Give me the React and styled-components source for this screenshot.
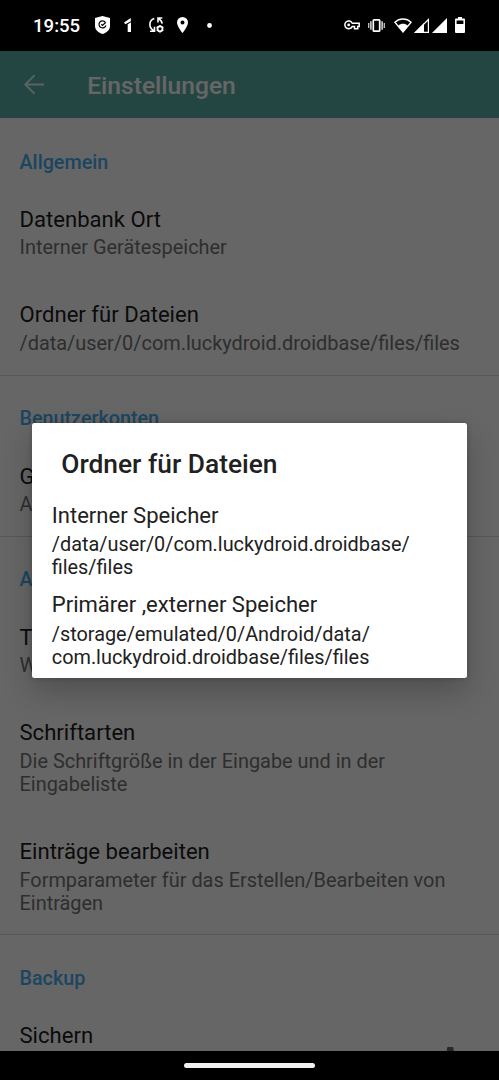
import React from "react";
import styled, { createGlobalStyle } from "styled-components";

const GlobalStyle = createGlobalStyle`
  * {
    box-sizing: border-box;
  }

  body {
    margin: 0;
    background: #000;
    font-family: Roboto, "Liberation Sans", sans-serif;
  }
`;

const Screen = styled.div`
  position: relative;
  display: flex;
  flex-direction: column;
  width: 499px;
  height: 1080px;
  overflow: hidden;
  background: #fff;
`;

const StatusBar = styled.header`
  z-index: 2;
  display: flex;
  flex: none;
  align-items: center;
  justify-content: space-between;
  height: 50.5px;
  padding: 0 34px 0 33px;
  background: #000;
  color: #fff;
`;

const StatusGroup = styled.div`
  display: flex;
  align-items: center;
`;

const Clock = styled.span`
  width: 61.5px;
  padding-top: 2px;
  font-size: 18.6px;
  font-weight: 500;
  line-height: 24px;
`;

const StatusIcon = styled.svg`
  display: block;
  flex: none;
  margin-right: ${(props) => props.$gap || 0}px;
  overflow: visible;
`;

const Toolbar = styled.div`
  display: flex;
  flex: none;
  align-items: center;
  height: 67.5px;
  padding: 1px 20px 0 24px;
  background: #5aafa8;
  color: #fff;
`;

const ToolbarTitle = styled.h1`
  margin: 2px 0 0 42.2px;
  font-size: 24.6px;
  font-weight: 500;
  line-height: 30px;
`;

const List = styled.main`
  flex: 1;
  min-height: 0;
  overflow: hidden;
`;

const Section = styled.section`
  border-bottom: 1px solid #dadada;
  margin-bottom: -0.8px;
`;

const Category = styled.h2`
  height: 65.5px;
  margin: 0;
  padding: 32.5px 19.5px 0;
  color: #46aef0;
  font-size: 19.75px;
  font-weight: 500;
  line-height: 23.5px;
`;

const Preference = styled.div`
  display: flex;
  align-items: center;
  justify-content: space-between;
  min-height: ${(props) => (props.$tall ? 118.7 : 95.5)}px;
  padding: ${(props) => (props.$action ? "0 33.5px 0 19.5px" : "0 19.5px")};
`;

const PreferenceText = styled.div`
  align-self: flex-start;
  padding-top: 22.4px;
`;

const PreferenceTitle = styled.div`
  color: #1c1c1c;
  font-size: 22.1px;
  line-height: 26px;
`;

const Summary = styled.div`
  margin-top: 4.6px;
  color: #747474;
  font-size: 19.92px;
  line-height: 23.2px;
  white-space: pre-line;
`;

const NavigationBar = styled.footer`
  z-index: 2;
  display: flex;
  flex: none;
  justify-content: center;
  height: 29px;
  padding-top: 12px;
  background: #000;
`;

const HomeHandle = styled.div`
  width: 131px;
  height: 5px;
  border-radius: 2.5px;
  background: #f1f1f1;
`;

const Scrim = styled.div`
  position: absolute;
  inset: 0;
  z-index: 1;
  display: flex;
  align-items: center;
  justify-content: center;
  padding-top: 21px;
  background: rgba(0, 0, 0, 0.6);
`;

const Dialog = styled.div`
  width: 434.5px;
  height: 255.6px;
  padding: 25.9px 19.5px 0;
  border-radius: 2.5px;
  background: #fff;
  box-shadow: 0 14px 30px rgba(0, 0, 0, 0.22), 0 0 5px rgba(0, 0, 0, 0.2);
  color: #212121;
`;

const DialogTitle = styled.h2`
  margin: 0 0 18px;
  padding-left: 9.5px;
  font-size: 26.35px;
  font-weight: 500;
  line-height: 30px;
`;

const Option = styled.div`
  padding: 6.3px 0;
`;

const OptionTitle = styled.div`
  font-size: 22.05px;
  line-height: 26px;
`;

const OptionPath = styled.div`
  margin-top: 4.4px;
  font-size: 19.88px;
  line-height: 23.2px;
  white-space: pre-line;
`;

const sections = [
  {
    name: "Allgemein",
    items: [
      { title: "Datenbank Ort", summary: "Interner Gerätespeicher" },
      {
        title: "Ordner für Dateien",
        summary: "/data/user/0/com.luckydroid.droidbase/files/files",
      },
    ],
  },
  {
    name: "Benutzerkonten",
    items: [{ title: "G", summary: "A" }],
  },
  {
    name: "A",
    items: [
      { title: "T", summary: "W" },
      {
        title: "Schriftarten",
        summary: "Die Schriftgröße in der Eingabe und in der\nEingabeliste",
        tall: true,
      },
      {
        title: "Einträge bearbeiten",
        summary: "Formparameter für das Erstellen/Bearbeiten von\nEinträgen",
        tall: true,
      },
    ],
  },
  {
    name: "Backup",
    items: [{ title: "Sichern", tall: true, action: true }],
  },
];

const folders = [
  {
    title: "Interner Speicher",
    path: "/data/user/0/com.luckydroid.droidbase/\nfiles/files",
  },
  {
    title: "Primärer ,externer Speicher",
    path: "/storage/emulated/0/Android/data/\ncom.luckydroid.droidbase/files/files",
  },
];

const ShieldIcon = () => (
  <StatusIcon width="15" height="18" viewBox="0 0 15 18" $gap={14.5}>
    <path d="M7.5 0 15 2v8c0 4-3.5 6.7-7.5 8C3.5 16.7 0 14 0 10V2z" fill="#fff" />
    <path d="M10.300 6.300A3.500 3.500 0 1 0 10.900 9.300M6.300 8.300l1.200 1.100 3.300-3.200" fill="none" stroke="#000" strokeWidth="1.200" />
  </StatusIcon>
);

const OneIcon = () => (
  <StatusIcon width="8" height="14" viewBox="0 0 8 14" $gap={16.5}>
    <path d="M0 4.400 6.800 0v3.200L1.300 6.200zM3.700 6.300l3.300-2V14H3.700z" fill="#fff" />
  </StatusIcon>
);

const SyncIcon = () => (
  <StatusIcon width="15" height="16" viewBox="0 0 15 16" $gap={13}>
    <g fill="none" stroke="#fff" strokeWidth="1.600">
      <path d="M5.300 1.600C2.500 2.500.9 4.700.9 7.500c0 2.600 1.500 4.800 4 6.200M1 14.300h4.500V9.800" />
      <path d="M13.200 6.700c-.3-1.900-1.500-3.900-3.600-5M13.300 1H9v4.400" />
      <circle cx="11" cy="11.800" r="2.500" strokeWidth="1.800" />
    </g>
    <path d="M11 8v1.200M11 14.400v1.200M7.700 9.900l1 .6M13.300 13.100l1 .6M7.700 13.700l1-.6M13.300 10.500l1-.6" stroke="#fff" strokeWidth="1.500" />
  </StatusIcon>
);

const PinIcon = () => (
  <StatusIcon width="11" height="16" viewBox="0 0 11 16" $gap={19}>
    <path
      fillRule="evenodd"
      d="M5.500 0A5.500 5.500 0 0 0 0 5.500C0 9.500 5.500 16 5.500 16S11 9.500 11 5.500A5.500 5.500 0 0 0 5.500 0zm0 3.600a2 2 0 1 1 0 4 2 2 0 0 1 0-4z"
      fill="#fff"
    />
  </StatusIcon>
);

const DotIcon = () => (
  <StatusIcon width="5" height="5" viewBox="0 0 5 5">
    <circle cx="2.500" cy="2.500" r="2.400" fill="#fff" />
  </StatusIcon>
);

const KeyIcon = () => (
  <StatusIcon width="16" height="10" viewBox="0 0 16 10" $gap={8}>
    <path
      d="M8.300 3.200h6.900v3.200h-1.500v2.400h-3.200V6.400H8.300A3.900 3.900 0 1 1 8.300 3.200z"
      fill="none"
      stroke="#fff"
      strokeWidth="1.500"
    />
    <circle cx="4.700" cy="4.900" r="1.400" fill="#fff" />
  </StatusIcon>
);

const VibrateIcon = () => (
  <StatusIcon width="17" height="13" viewBox="0 0 17 13" $gap={9}>
    <rect x="5.300" y=".8" width="6.400" height="11.400" rx=".8" fill="none" stroke="#fff" strokeWidth="1.700" />
    <path d="M.7 4v5M16.300 4v5" stroke="#bbb" strokeWidth="1.400" />
    <path d="M2.900 2.300v8.400M14.100 2.300v8.400" stroke="#ddd" strokeWidth="1.500" />
  </StatusIcon>
);

const WifiIcon = () => (
  <StatusIcon width="18" height="15" viewBox="0 0 18 15" $gap={1.5}>
    <path d="M.9 4.200C5.500-.1 12.500-.1 17.100 4.200L9 13.900z" fill="none" stroke="#fff" strokeWidth="1.300" />
    <path d="M4.200 7.700c2.800-2.500 6.800-2.500 9.600 0L9 14.500z" fill="#fff" />
  </StatusIcon>
);

const SignalLowIcon = () => (
  <StatusIcon width="15" height="15" viewBox="0 0 15 15" $gap={3}>
    <path d="M0 15 10 5v10z" fill="#fff" />
    <path d="M1.500 14.400 14.400 1.500v12.900z" fill="none" stroke="#fff" strokeWidth="1.200" />
  </StatusIcon>
);

const SignalIcon = () => (
  <StatusIcon width="15" height="15" viewBox="0 0 15 15" $gap={8.5}>
    <path d="M0 15 15 0v15z" fill="#fff" />
  </StatusIcon>
);

const BatteryIcon = () => (
  <StatusIcon width="10" height="16" viewBox="0 0 10 16">
    <path
      fillRule="evenodd"
      d="M3 0h4v1.500h2q1 0 1 1V15q0 1-1 1H1q-1 0-1-1V2.500q0-1 1-1h2zM1.600 3.400V7h6.800V3.400z"
      fill="#fff"
    />
  </StatusIcon>
);

const BackIcon = () => (
  <StatusIcon width="21" height="21" viewBox="0 0 21 21">
    <path d="M20 10.500H1.700M10.500 1.300l-9.200 9.200 9.200 9.200" fill="none" stroke="#fff" strokeOpacity=".85" strokeWidth="1.900" />
  </StatusIcon>
);

const GearIcon = () => (
  <StatusIcon width="30.500" height="30.500" viewBox="0 0 24 24">
    <path
      d="M19.140 12.940c.04-.3.060-.61.060-.94 0-.32-.02-.64-.07-.94l2.030-1.580c.18-.14.23-.41.120-.61l-1.920-3.320c-.12-.22-.37-.29-.59-.22l-2.390.96c-.5-.38-1.030-.7-1.620-.94l-.36-2.540c-.04-.24-.24-.41-.48-.41h-3.840c-.24 0-.43.17-.47.410l-.36 2.540c-.59.240-1.130.57-1.620.94l-2.390-.96c-.22-.08-.47 0-.59.220L2.740 8.870c-.12.210-.08.470.12.610l2.030 1.580c-.05.300-.09.630-.09.940s.02.640.07.940l-2.030 1.580c-.18.140-.23.410-.12.610l1.920 3.320c.12.220.37.290.59.220l2.390-.96c.5.380 1.030.7 1.620.94l.36 2.540c.05.240.24.410.48.410h3.840c.24 0 .44-.17.470-.41l.36-2.540c.59-.24 1.130-.56 1.620-.94l2.390.96c.22.080.47 0 .59-.22l1.920-3.320c.12-.22.070-.47-.12-.61zM12 15.600a3.600 3.600 0 1 1 0-7.200 3.600 3.600 0 0 1 0 7.200z"
      fill="#686868"
    />
  </StatusIcon>
);

function App() {
  return (
    <>
      <GlobalStyle />
      <Screen>
        <StatusBar>
          <StatusGroup>
            <Clock>19:55</Clock>
            <ShieldIcon />
            <OneIcon />
            <SyncIcon />
            <PinIcon />
            <DotIcon />
          </StatusGroup>
          <StatusGroup>
            <KeyIcon />
            <VibrateIcon />
            <WifiIcon />
            <SignalLowIcon />
            <SignalIcon />
            <BatteryIcon />
          </StatusGroup>
        </StatusBar>
        <Toolbar>
          <BackIcon />
          <ToolbarTitle>Einstellungen</ToolbarTitle>
        </Toolbar>
        <List>
          {sections.map((section) => (
            <Section key={section.name}>
              <Category>{section.name}</Category>
              {section.items.map((item) => (
                <Preference key={item.title} $tall={item.tall} $action={item.action}>
                  <PreferenceText>
                    <PreferenceTitle>{item.title}</PreferenceTitle>
                    {item.summary && <Summary>{item.summary}</Summary>}
                  </PreferenceText>
                  {item.action && <GearIcon />}
                </Preference>
              ))}
            </Section>
          ))}
        </List>
        <NavigationBar>
          <HomeHandle />
        </NavigationBar>
        <Scrim>
          <Dialog>
            <DialogTitle>Ordner für Dateien</DialogTitle>
            {folders.map((folder) => (
              <Option key={folder.title}>
                <OptionTitle>{folder.title}</OptionTitle>
                <OptionPath>{folder.path}</OptionPath>
              </Option>
            ))}
          </Dialog>
        </Scrim>
      </Screen>
    </>
  );
}

export default App;
